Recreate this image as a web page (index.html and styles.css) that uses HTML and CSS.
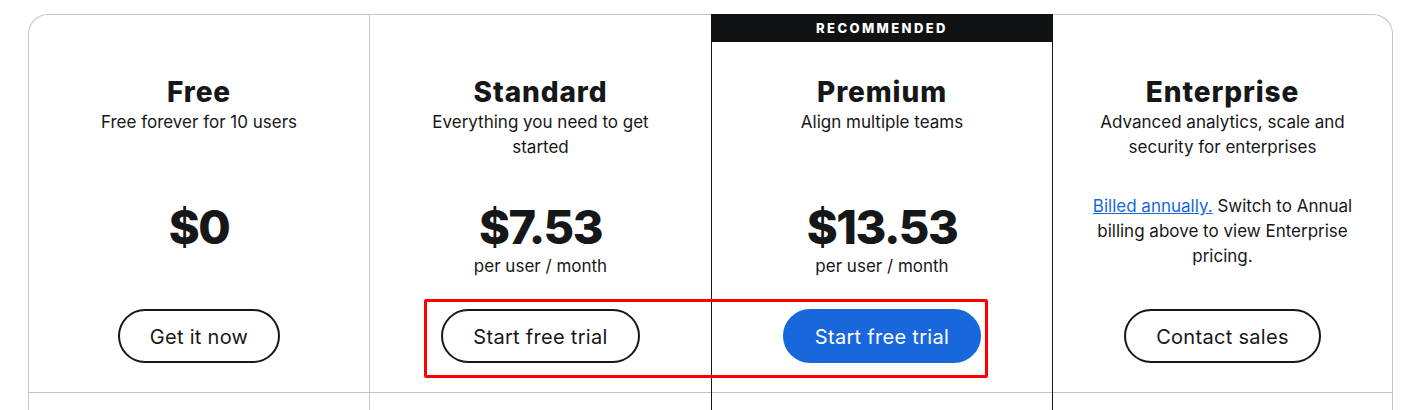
FILE: index.html
```html
<!DOCTYPE html>
<html lang="en">
<head>
<meta charset="utf-8">
<title>Pricing</title>
<link rel="stylesheet" href="styles.css">
</head>
<body>
<div class="page">
  <div class="plans">
    <div class="plan">
      <div class="plan-top">
        <h2 class="plan-title">Free</h2>
        <p class="plan-desc">Free forever for 10 users</p>
        <div class="price-area">
          <div class="price">$0</div>
        </div>
        <a class="btn btn-outline" href="#">Get it now</a>
      </div>
      <div class="plan-features"></div>
    </div>
    <div class="plan plan-sep">
      <div class="plan-top">
        <h2 class="plan-title">Standard</h2>
        <p class="plan-desc">Everything you need to get started</p>
        <div class="price-area">
          <div class="price">$7.53</div>
          <div class="price-unit">per user / month</div>
        </div>
        <a class="btn btn-outline" href="#">Start free trial</a>
      </div>
      <div class="plan-features"></div>
    </div>
    <div class="plan plan-featured">
      <div class="badge">RECOMMENDED</div>
      <div class="plan-top">
        <h2 class="plan-title">Premium</h2>
        <p class="plan-desc">Align multiple teams</p>
        <div class="price-area">
          <div class="price">$13.53</div>
          <div class="price-unit">per user / month</div>
        </div>
        <a class="btn btn-primary" href="#">Start free trial</a>
      </div>
      <div class="plan-features"></div>
    </div>
    <div class="plan">
      <div class="plan-top">
        <h2 class="plan-title">Enterprise</h2>
        <p class="plan-desc">Advanced analytics, scale and security for enterprises</p>
        <div class="price-area price-note-area">
          <p class="price-note"><a class="link" href="#">Billed annually.</a> Switch to Annual billing above to view Enterprise pricing.</p>
        </div>
        <a class="btn btn-outline" href="#">Contact sales</a>
      </div>
      <div class="plan-features"></div>
    </div>
  </div>
  <div class="highlight"></div>
</div>
</body>
</html>
```

FILE: styles.css
```css
html, body {
  margin: 0;
  padding: 0;
  overflow: hidden;
  background: #ffffff;
}

body {
  font-family: "Inter", "Liberation Sans", sans-serif;
  color: #161718;
}

.page {
  position: relative;
  padding: 14px 0 0 28px;
}

.plans {
  width: 1363px;
  display: grid;
  grid-template-columns: 340px 342px 342px 339px;
  border: 1px solid #c4c4c4;
  border-bottom: none;
  border-radius: 20px 20px 0 0;
}

.plan {
  position: relative;
  display: flex;
  flex-direction: column;
}

.plan-sep {
  border-left: 1px solid #c4c4c4;
}

.plan-featured {
  border-left: 1px solid #161718;
  border-right: 1px solid #161718;
  margin-top: -1px;
  padding-top: 1px;
}

.badge {
  position: absolute;
  top: 0;
  left: -1px;
  right: -1px;
  height: 28px;
  background: #111213;
  color: #ffffff;
  font-size: 13px;
  font-weight: 800;
  letter-spacing: 2.4px;
  line-height: 29px;
  text-align: center;
}

.plan-top {
  height: 378px;
  box-sizing: border-box;
  padding-top: 59px;
  border-bottom: 1px solid #c4c4c4;
  display: flex;
  flex-direction: column;
  align-items: center;
  text-align: center;
}

.plan-title {
  margin: 0;
  font-size: 28px;
  line-height: 36px;
  font-weight: 800;
  letter-spacing: 0.9px;
}

.plan-desc {
  margin: 0;
  width: 260px;
  height: 50px;
  font-size: 17px;
  line-height: 25px;
}

.price-area {
  height: 149px;
  box-sizing: border-box;
  padding-top: 40px;
  display: flex;
  flex-direction: column;
  align-items: center;
}

.price {
  font-size: 47px;
  line-height: 54px;
  font-weight: 800;
  letter-spacing: -1.5px;
}

.price-unit {
  font-size: 17px;
  line-height: 24px;
}

.price-note-area {
  padding-top: 34px;
}

.price-note {
  margin: 0;
  width: 285px;
  font-size: 17px;
  line-height: 25px;
}

.link {
  color: #1868db;
  text-decoration: underline;
}

.btn {
  display: flex;
  align-items: center;
  justify-content: center;
  height: 54px;
  box-sizing: border-box;
  padding: 1px 30px 0;
  border-radius: 27px;
  font-size: 20px;
  letter-spacing: 0.3px;
  text-decoration: none;
  white-space: nowrap;
}

.btn-outline {
  border: 2px solid #161718;
  color: #161718;
  background: #ffffff;
}

.btn-primary {
  border: 2px solid #1868db;
  background: #1868db;
  color: #ffffff;
}

.plan-features {
  height: 120px;
}

.highlight {
  position: absolute;
  left: 424px;
  top: 299px;
  width: 558px;
  height: 73px;
  border: 3px solid #ff0000;
  border-radius: 2px;
  pointer-events: none;
}
```
